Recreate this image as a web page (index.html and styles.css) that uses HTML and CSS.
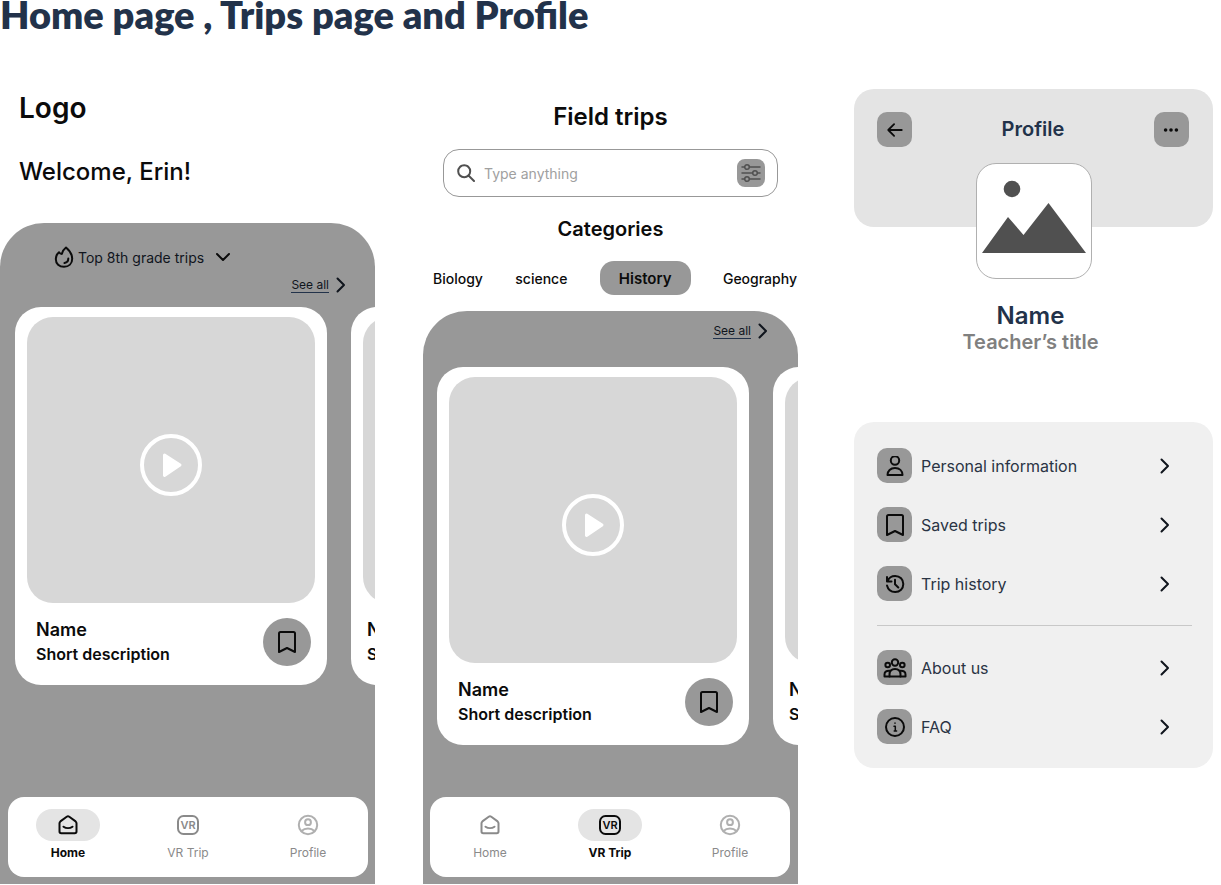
FILE: index.html
```html
<!DOCTYPE html>
<html lang="en">

<head>
  <meta charset="UTF-8">
  <meta name="viewport" content="width=device-width, initial-scale=1">
  <title>Home page, Trips page and Profile</title>
  <link rel="stylesheet" href="styles.css">
</head>

<body>
  <!-- Shared icons -->
  <svg class="sprite" aria-hidden="true">
    <symbol id="chevron" viewBox="0 0 10 16">
      <path d="M1.5 1.5L8 8L1.5 14.5" />
    </symbol>
    <symbol id="bookmark" viewBox="0 0 20 24">
      <path d="M2 3.5C2 2.5 2.5 2 3.5 2H16.500C17.500 2 18 2.500 18 3.500V22L10 18L2 22Z" />
    </symbol>
    <symbol id="play" viewBox="0 0 62 62">
      <circle cx="31" cy="31" r="29" fill="none" stroke="#fff" stroke-width="4" />
      <path d="M24.500 21L40 31L24.500 41.500Z" fill="#fff" stroke="#fff" stroke-width="3" stroke-linejoin="round" />
    </symbol>
    <symbol id="home" viewBox="0 0 20 20">
      <path d="M1.500 8.200C1.500 7.400 1.800 6.900 2.400 6.400L8.700 1.800C9.500 1.200 10.500 1.200 11.300 1.800L17.600 6.400C18.200 6.900 18.500 7.400 18.500 8.200V16.500C18.500 17.600 17.800 18.300 16.700 18.300H3.300C2.200 18.300 1.500 17.600 1.500 16.500Z" />
      <path d="M5.500 11.700C8 13.500 12 13.500 14.500 11.700" />
    </symbol>
    <symbol id="vr" viewBox="0 0 24 22">
      <rect x="2" y="2" width="20" height="18" rx="5.500" />
      <text x="12" y="15" text-anchor="middle">VR</text>
    </symbol>
    <symbol id="account" viewBox="0 0 22 22">
      <circle cx="11" cy="11" r="9.200" />
      <circle cx="11" cy="8.200" r="2.900" />
      <path d="M4.500 17C8 13.600 14 13.600 17.500 17" />
    </symbol>
  </svg>

  <h1>Home page , Trips page and Profile</h1>

  <main class="screens">

    <!-- Home -->
    <section class="screen">
      <header class="home-header">
        <div class="logo">Logo</div>
        <h2 class="welcome">Welcome, Erin!</h2>
      </header>
      <div class="panel">
        <div class="top-trips">
          <svg class="icon flame" viewBox="0 0 20 24" aria-hidden="true">
            <path d="M12 2.500C15.600 5.500 18.200 9.500 18.200 13.700C18.200 18.700 14.800 21.800 10 21.800S1.800 18.700 1.800 14C1.800 11.400 2.900 9 5 7.200C5.700 8.300 6.500 8.900 7.800 8.900C8.500 6.200 9.800 4.200 12 2.500Z" />
            <path d="M14.300 13.500C14.300 16 13 17.600 10.500 18" />
          </svg>
          <label class="hidden" for="grade">Grade</label>
          <select id="grade">
            <option>Top 8th grade trips</option>
          </select>
          <svg class="icon chevron-down" viewBox="0 0 16 10" aria-hidden="true">
            <path d="M2 2L8 8L14 2" />
          </svg>
        </div>
        <a class="see-all" href="#"><span>See all</span><svg class="icon chevron"><use href="#chevron" /></svg></a>
        <div class="cards">
          <article class="card">
            <button class="media" type="button" aria-label="Play"><svg class="play"><use href="#play" /></svg></button>
            <div class="card-footer">
              <div>
                <h3>Name</h3>
                <p>Short description</p>
              </div>
              <button class="save" type="button" aria-label="Save trip"><svg class="icon bookmark"><use href="#bookmark" /></svg></button>
            </div>
          </article>
          <article class="card">
            <button class="media" type="button" aria-label="Play"></button>
            <div class="card-footer">
              <div>
                <h3>Name</h3>
                <p>Short description</p>
              </div>
            </div>
          </article>
        </div>
        <nav class="tabs">
          <a class="active" href="#"><span class="pill"><svg class="icon tab-home"><use href="#home" /></svg></span>Home</a>
          <a href="#"><span class="pill"><svg class="icon tab-vr"><use href="#vr" /></svg></span>VR Trip</a>
          <a href="#"><span class="pill"><svg class="icon tab-account"><use href="#account" /></svg></span>Profile</a>
        </nav>
      </div>
    </section>

    <!-- Trips -->
    <section class="screen">
      <header class="trips-header">
        <h2>Field trips</h2>
        <form class="search">
          <svg class="icon search-icon" viewBox="0 0 18 18" aria-hidden="true">
            <circle cx="7.200" cy="7.200" r="6" />
            <path d="M11.500 11.500L17 17" />
          </svg>
          <label class="hidden" for="search">Search</label>
          <input type="text" id="search" placeholder="Type anything">
          <button class="filter" type="button" aria-label="Filter">
            <svg class="icon" viewBox="0 0 20 20">
              <path d="M1 4H3.500M8.500 4H19M1 10H11.500M16.500 10H19M1 16H3.500M8.500 16H19" />
              <circle cx="6" cy="4" r="2.300" />
              <circle cx="14" cy="10" r="2.300" />
              <circle cx="6" cy="16" r="2.300" />
            </svg>
          </button>
        </form>
        <h3>Categories</h3>
      </header>
      <div class="categories">
        <button type="button">Biology</button>
        <button type="button">science</button>
        <button class="selected" type="button">History</button>
        <button type="button">Geography</button>
      </div>
      <div class="panel trips-panel">
        <a class="see-all" href="#"><span>See all</span><svg class="icon chevron"><use href="#chevron" /></svg></a>
        <div class="cards">
          <article class="card">
            <button class="media" type="button" aria-label="Play"><svg class="play"><use href="#play" /></svg></button>
            <div class="card-footer">
              <div>
                <h3>Name</h3>
                <p>Short description</p>
              </div>
              <button class="save" type="button" aria-label="Save trip"><svg class="icon bookmark"><use href="#bookmark" /></svg></button>
            </div>
          </article>
          <article class="card">
            <button class="media" type="button" aria-label="Play"></button>
            <div class="card-footer">
              <div>
                <h3>Name</h3>
                <p>Short description</p>
              </div>
            </div>
          </article>
        </div>
        <nav class="tabs">
          <a href="#"><span class="pill"><svg class="icon tab-home"><use href="#home" /></svg></span>Home</a>
          <a class="active" href="#"><span class="pill"><svg class="icon tab-vr"><use href="#vr" /></svg></span>VR Trip</a>
          <a href="#"><span class="pill"><svg class="icon tab-account"><use href="#account" /></svg></span>Profile</a>
        </nav>
      </div>
    </section>

    <!-- Profile -->
    <section class="screen profile">
      <header class="profile-header">
        <button class="tile" type="button" aria-label="Back">
          <svg class="icon" viewBox="0 0 20 20">
            <path d="M17.500 10H2.500M9 3.500L2.500 10L9 16.500" />
          </svg>
        </button>
        <h2>Profile</h2>
        <button class="tile" type="button" aria-label="More">
          <svg class="icon dots" viewBox="0 0 20 20">
            <circle cx="4" cy="10" r="2" />
            <circle cx="10" cy="10" r="2" />
            <circle cx="16" cy="10" r="2" />
          </svg>
        </button>
      </header>
      <div class="avatar">
        <svg viewBox="0 0 114 114" aria-hidden="true">
          <circle cx="35" cy="25" r="8.300" />
          <path d="M5 89L31 53L46.500 71L71.500 39L109 89Z" />
        </svg>
      </div>
      <div class="person">
        <h3>Name</h3>
        <p>Teacher’s title</p>
      </div>
      <nav class="menu">
        <a href="#">
          <span class="tile">
            <svg class="icon" viewBox="0 0 20 20">
              <circle cx="10" cy="4.500" r="4.200" />
              <path d="M2.500 19C2.500 14.800 5.500 12 10 12S17.500 14.800 17.500 19Z" />
            </svg>
          </span>
          <span>Personal information</span>
          <svg class="icon chevron"><use href="#chevron" /></svg>
        </a>
        <a href="#">
          <span class="tile"><svg class="icon bookmark"><use href="#bookmark" /></svg></span>
          <span>Saved trips</span>
          <svg class="icon chevron"><use href="#chevron" /></svg>
        </a>
        <a href="#">
          <span class="tile">
            <svg class="icon" viewBox="0 0 20 20">
              <path d="M2 3V7.500H6.500M2.500 7C4 3.500 6.800 2 10.200 2C15 2 18.300 5.500 18.300 10S15 18 10.200 18C6 18 3 15.500 2 11.500" />
              <path d="M10 5.800V10.300L13.300 13.500" />
            </svg>
          </span>
          <span>Trip history</span>
          <svg class="icon chevron"><use href="#chevron" /></svg>
        </a>
        <hr>
        <a href="#">
          <span class="tile">
            <svg class="icon group" viewBox="0 0 24 20">
              <circle cx="12" cy="4.500" r="3.200" />
              <circle cx="4.700" cy="7" r="2.300" />
              <circle cx="19.300" cy="7" r="2.300" />
              <path d="M6.500 18.500V16.500C6.500 13 8.500 11 12 11S17.500 13 17.500 16.500V18.500Z" />
              <path d="M6.500 18.500H1.500V16.500C1.500 14 3 12.500 6.800 12.700M17.500 18.500H22.500V16.500C22.500 14 21 12.500 17.200 12.700" />
            </svg>
          </span>
          <span>About us</span>
          <svg class="icon chevron"><use href="#chevron" /></svg>
        </a>
        <a href="#">
          <span class="tile">
            <svg class="icon" viewBox="0 0 20 20">
              <circle cx="10" cy="10" r="9" />
              <path class="thin" d="M9 9.200H10.300V13.800M9.200 14H11.600M10 6V6.200" />
            </svg>
          </span>
          <span>FAQ</span>
          <svg class="icon chevron"><use href="#chevron" /></svg>
        </a>
      </nav>
    </section>

  </main>
</body>

</html>
```
FILE: styles.css
```css
* {
  box-sizing: border-box;
}

body {
  display: flex;
  flex-direction: column;
  min-height: 100vh;
  margin: 0;
  padding-bottom: 1px;
  background-color: #fff;
  color: #0b0b0b;
  font-family: Inter, "Liberation Sans", sans-serif;
}

h1,
h2,
h3,
p {
  margin: 0;
  font-weight: 600;
}

h1 {
  margin-bottom: 4px;
  color: #22324a;
  font-family: Lato, sans-serif;
  font-size: 38px;
  font-weight: 800;
  line-height: 28px;
}

a {
  color: inherit;
  text-decoration: none;
}

button {
  padding: 0;
  border: none;
  background: none;
  color: inherit;
  font-family: inherit;
  cursor: pointer;
}

.sprite {
  display: none;
}

.hidden {
  position: absolute;
  width: 1px;
  height: 1px;
  overflow: hidden;
  clip-path: inset(50%);
}

.icon {
  display: block;
  width: 20px;
  height: 20px;
  fill: none;
  stroke: currentColor;
  stroke-width: 2;
  stroke-linecap: round;
  stroke-linejoin: round;
}

.chevron {
  width: 10px;
  height: 16px;
}

.screens {
  display: grid;
  flex: 1;
  grid-template-columns: repeat(3, minmax(0, 1fr));
  gap: 48px;
}

.screen {
  display: flex;
  flex-direction: column;
}

/* Home */
.home-header {
  padding: 60px 19px 35px;
}

.logo {
  margin-bottom: 32px;
  font-size: 28px;
  font-weight: 600;
  line-height: 32px;
}

.welcome {
  font-size: 24px;
  font-weight: 500;
  line-height: 32px;
}

.panel {
  display: flex;
  flex: 1;
  flex-direction: column;
  padding: 22px 7px 7px 8px;
  border-radius: 44px 44px 0 0;
  background-color: #989898;
  overflow: hidden;
}

.top-trips {
  display: flex;
  align-items: center;
  height: 24px;
  margin: 0 0 8px 46px;
}

.flame {
  height: 24px;
  margin-right: 4px;
}

.top-trips select {
  height: 24px;
  padding: 0;
  border: none;
  appearance: none;
  background: none;
  color: #10151d;
  font-family: inherit;
  font-size: 14px;
}

.chevron-down {
  width: 16px;
  height: 10px;
  margin-left: 10px;
  pointer-events: none;
}

.see-all {
  display: flex;
  align-items: center;
  align-self: flex-end;
  gap: 7px;
  height: 16px;
  margin-right: 22px;
  color: #10151d;
  font-size: 12px;
}

.see-all span {
  border-bottom: 1px solid #22324a;
  line-height: 14px;
}

.cards {
  display: flex;
  gap: 24px;
  margin: 14px -8px 24px 7px;
  overflow: hidden;
}

.card {
  flex: 0 0 312px;
  padding: 10px 12px 19px;
  border-radius: 26px;
  background-color: #fff;
}

.media {
  display: flex;
  align-items: center;
  justify-content: center;
  width: 100%;
  aspect-ratio: 288 / 286;
  border-radius: 26px;
  background-color: #d7d7d7;
}

.play {
  width: 62px;
  height: 62px;
  margin-top: 10px;
}

.card-footer {
  display: flex;
  align-items: center;
  justify-content: space-between;
  height: 48px;
  margin-top: 15px;
  padding: 0 4px 0 9px;
}

.card + .card .card-footer {
  padding-left: 4px;
}

.card h3 {
  font-size: 18px;
  line-height: 24px;
}

.card p {
  font-size: 16px;
  line-height: 24px;
}

.save {
  display: grid;
  place-items: center;
  width: 48px;
  height: 48px;
  border-radius: 50%;
  background-color: #989898;
}

.bookmark {
  height: 24px;
}

.tabs {
  display: grid;
  grid-template-columns: repeat(3, 1fr);
  height: 80px;
  margin-top: auto;
  padding-top: 12px;
  border-radius: 16px;
  background-color: #fff;
}

.tabs a {
  display: flex;
  flex-direction: column;
  align-items: center;
  gap: 4px;
  color: #8a8a8a;
  font-size: 12px;
  line-height: 16px;
}

.pill {
  display: grid;
  place-items: center;
  width: 64px;
  height: 32px;
  border-radius: 16px;
}

.tabs .active {
  color: #0b0b0b;
  font-weight: 700;
}

.active .pill {
  background-color: #e4e4e4;
}

.tab-vr {
  width: 24px;
  height: 22px;
  font-size: 11px;
  font-weight: 600;
}

.tab-account {
  width: 22px;
  height: 22px;
  color: #b0b0b0;
}

#vr text {
  fill: currentColor;
  stroke: none;
}

/* Trips */
.trips-header {
  padding: 69px 20px 16px;
  text-align: center;
}

.trips-header h2 {
  font-size: 24px;
  line-height: 32px;
}

.trips-header h3 {
  font-size: 20px;
  line-height: 32px;
}

.search {
  display: flex;
  align-items: center;
  height: 48px;
  margin: 16px 0;
  padding: 0 12px 0 13px;
  border: 1px solid #989898;
  border-radius: 16px;
}

.search-icon {
  width: 18px;
  height: 18px;
  color: #505050;
}

.search input {
  flex: 1;
  min-width: 0;
  padding: 0 9px;
  border: none;
  outline: none;
  background: none;
  font-family: inherit;
  font-size: 14px;
}

.search input::placeholder {
  color: #a0a0a0;
}

.filter {
  display: grid;
  place-items: center;
  width: 28px;
  height: 28px;
  border-radius: 8px;
  background-color: #989898;
  color: #505050;
}

.filter .icon {
  stroke-width: 1.5;
}

.categories {
  display: flex;
  align-items: center;
  justify-content: space-between;
  margin-bottom: 16px;
  padding: 0 1px 0 10px;
}

.categories button {
  height: 34px;
  font-size: 14px;
  font-weight: 500;
}

.categories .selected {
  padding: 0 19px;
  border-radius: 14px;
  background-color: #989898;
  font-size: 15px;
  font-weight: 600;
}

.trips-panel {
  padding: 12px 8px 7px 7px;
}

.trips-panel .cards {
  margin-top: 28px;
}

/* Profile */
.profile {
  padding: 57px 8px 0;
  color: #22324a;
}

.profile-header {
  display: flex;
  align-items: flex-start;
  justify-content: space-between;
  height: 138px;
  padding: 23px 24px 0 23px;
  border-radius: 20px;
  background-color: #e4e4e4;
}

.profile-header h2 {
  font-size: 20px;
  line-height: 35px;
}

.tile {
  display: grid;
  place-items: center;
  width: 35px;
  height: 35px;
  border-radius: 10px;
  background-color: #989898;
  color: #0b0b0b;
}

.profile-header .icon {
  width: 18px;
}

.dots {
  fill: currentColor;
  stroke: none;
}

.avatar {
  align-self: center;
  width: 116px;
  height: 116px;
  margin-top: -64px;
  border: 1px solid #b0b0b0;
  border-radius: 20px;
  background-color: #fff;
}

.avatar svg {
  display: block;
  fill: #505050;
}

.person {
  margin: 23px 0 68px;
  padding-right: 6px;
  text-align: center;
}

.person h3 {
  font-size: 24px;
  line-height: 28px;
}

.person p {
  color: #808080;
  font-size: 20px;
  line-height: 24px;
}

.menu {
  display: flex;
  flex-direction: column;
  gap: 24px;
  padding: 26px 21px 24px 23px;
  border-radius: 20px;
  background-color: #f0f0f0;
  color: #2a3444;
  font-size: 16px;
}

.menu a {
  display: flex;
  align-items: center;
  gap: 9px;
  padding-right: 22px;
}

.menu .chevron {
  margin-left: auto;
  color: #10151d;
}

.menu .group {
  width: 24px;
}

.menu .thin {
  stroke-width: 1.5;
}

.menu hr {
  height: 1px;
  margin: 0;
  border: none;
  background-color: #c8c8c8;
}
```
